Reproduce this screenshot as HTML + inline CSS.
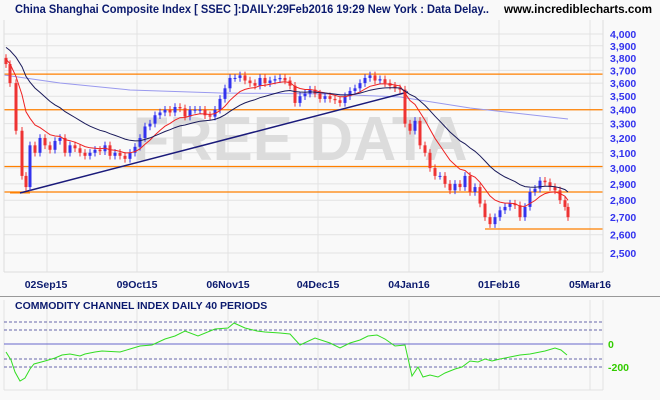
<!DOCTYPE html>
<html><head><meta charset="utf-8"><style>
body{margin:0;background:#fff;width:660px;height:400px;overflow:hidden;font-family:"Liberation Sans",sans-serif}
</style></head><body>
<svg id="s" width="660" height="400" xmlns="http://www.w3.org/2000/svg" style="display:block">
<rect width="660" height="400" fill="#f9f9f9"/>
<text x="15" y="13" font-size="11.5" font-weight="bold" fill="#0b1a6e" textLength="474" lengthAdjust="spacingAndGlyphs" font-family="Liberation Sans,sans-serif">China Shanghai Composite Index [ SSEC ]:DAILY:29Feb2016 19:29 New York : Data Delay..</text>
<text x="504" y="13" font-size="11.5" font-weight="bold" fill="#000" textLength="148" lengthAdjust="spacingAndGlyphs" font-family="Liberation Sans,sans-serif">www.incrediblecharts.com</text>
<g id="grid" stroke="#e3e3e3" stroke-width="1"></g>
<text x="300" y="160" font-size="62" font-weight="bold" fill="#dcdcdc" text-anchor="middle" textLength="335" lengthAdjust="spacingAndGlyphs" font-family="Liberation Sans,sans-serif">FREE DATA</text>
<g id="price"></g>
<line x1="4" y1="272" x2="603" y2="272" stroke="#ddd"/>
<line x1="603" y1="20" x2="603" y2="272" stroke="#ddd"/>
<line x1="4" y1="20" x2="4" y2="272" stroke="#ddd"/>
<g font-size="10.5" font-weight="bold" fill="#0b1a6e" text-anchor="middle" font-family="Liberation Sans,sans-serif">
<text x="46" y="288">02Sep15</text><text x="137" y="288">09Oct15</text><text x="228" y="288">06Nov15</text><text x="318" y="288">04Dec15</text><text x="409" y="288">04Jan16</text><text x="499" y="288">01Feb16</text><text x="590" y="288">05Mar16</text>
</g>
<line x1="0" y1="296.5" x2="660" y2="296.5" stroke="#999"/>
<text x="15" y="309" font-size="10.5" font-weight="bold" fill="#0b1a6e" font-family="Liberation Sans,sans-serif">COMMODITY CHANNEL INDEX DAILY 40 PERIODS</text>
<g id="cci"></g>
<g font-size="10.5" font-weight="bold" fill="#33cc00" font-family="Liberation Sans,sans-serif"><text x="608" y="348">0</text><text x="608" y="371">-200</text></g>
</svg>
<script>
var NS="http://www.w3.org/2000/svg",s=document.getElementById('s');
function el(p,t,a){var e=document.createElementNS(NS,t);for(var k in a)e.setAttribute(k,a[k]);document.getElementById(p).appendChild(e);return e;}
function Y(p){return 34+466*Math.log(4000/p);}
var gx=[47,137,228,318,409,499,590];
gx.forEach(function(x){el('grid','line',{x1:x,y1:20,x2:x,y2:272});el('grid','line',{x1:x,y1:300,x2:x,y2:390});});
var lab=document.createElementNS(NS,'g');lab.setAttribute('font-size','10.5');lab.setAttribute('font-weight','bold');lab.setAttribute('fill','#3333ee');lab.setAttribute('font-family','Liberation Sans,sans-serif');s.appendChild(lab);
for(var p=2500;p<=4000;p+=100){var y=Y(p);el('grid','line',{x1:4,y1:y,x2:603,y2:y});var t=document.createElementNS(NS,'text');t.setAttribute('x',610);t.setAttribute('y',y+4);t.textContent=(p/1000|0)+','+String(p%1000).padStart(3,'0');lab.appendChild(t);}
el('grid','line',{x1:4,y1:390,x2:603,y2:390});el('grid','line',{x1:603,y1:300,x2:603,y2:390});el('grid','line',{x1:4,y1:300,x2:4,y2:390});
[[4,3670],[4,3400],[4,3010],[4,2850]].forEach(function(a){var y=Y(a[1]);el('price','line',{x1:a[0],y1:y,x2:603,y2:y,stroke:'#ff8000','stroke-width':1.3});});
el('price','line',{x1:10,y1:193,x2:30,y2:193,stroke:'#ff8000'});
el('price','line',{x1:485,y1:229,x2:603,y2:229,stroke:'#ff8000','stroke-width':1.3});
el('price','polyline',{points:'4,75 60,83 130,90 220,93 330,94 400,97 470,108 568,119',fill:'none',stroke:'#9999ee','stroke-width':1});
el('price','line',{x1:20,y1:193,x2:408,y2:92,stroke:'#1a1a7a','stroke-width':1.5});
var d=[[6,3750],[10,3600],[16,3250],[22,2950],[26,2880],[30,3150],[35,3100],[40,3200],[45,3150],[50,3120],[55,3180],[60,3200],[65,3100],[70,3150],[75,3130],[80,3100],[85,3080],[90,3100],[95,3120],[100,3110],[105,3150],[110,3080],[115,3100],[120,3080],[125,3060],[130,3100],[135,3140],[140,3200],[145,3280],[150,3300],[155,3360],[160,3380],[165,3400],[170,3380],[175,3420],[180,3410],[185,3350],[190,3400],[195,3400],[200,3400],[205,3360],[210,3350],[215,3400],[220,3480],[225,3560],[230,3640],[235,3640],[240,3660],[245,3620],[250,3600],[255,3580],[260,3640],[265,3600],[270,3620],[275,3630],[280,3640],[285,3620],[290,3580],[295,3450],[300,3500],[305,3520],[310,3550],[315,3520],[320,3480],[325,3500],[330,3480],[335,3470],[340,3450],[345,3500],[350,3540],[355,3560],[360,3600],[365,3640],[370,3660],[375,3620],[380,3630],[385,3600],[390,3580],[395,3560],[400,3550],[405,3300],[410,3250],[415,3320],[420,3150],[425,3100],[430,3000],[435,2950],[440,2950],[445,2900],[450,2860],[455,2900],[460,2880],[465,2950],[470,2850],[475,2880],[480,2780],[485,2700],[490,2660],[495,2700],[500,2740],[505,2760],[510,2780],[515,2770],[520,2700],[525,2760],[530,2850],[535,2870],[540,2920],[545,2910],[550,2880],[555,2860],[560,2800],[565,2760],[568,2700]];
var e1=3800,e2=3900,p1=[],p2=[];
for(var i=0;i<d.length;i++){var x=d[i][0],c=d[i][1],o=i?d[i-1][1]:3800;
 e1+= (c-e1)*0.2;e2+=(c-e2)*0.09;p1.push(x+','+Y(e1).toFixed(1));p2.push(x+','+Y(e2).toFixed(1));
 var up=c>=o,col=up?'#3333ee':'#ee3333',hi=Math.max(o,c)*1.008,lo=Math.min(o,c)*0.992;
 el('price','line',{x1:x,y1:Y(hi),x2:x,y2:Y(lo),stroke:col});
 var yt=Y(Math.max(o,c)),yb=Y(Math.min(o,c));
 el('price','rect',{x:x-1.5,y:yt,width:3,height:Math.max(1,yb-yt),fill:col});}
el('price','polyline',{points:p1.join(' '),fill:'none',stroke:'#ee2222','stroke-width':1});
el('price','polyline',{points:p2.join(' '),fill:'none',stroke:'#1a1a5a','stroke-width':1});
[322,330,359,367].forEach(function(y){el('cci','line',{x1:4,y1:y,x2:603,y2:y,stroke:'#6666aa','stroke-dasharray':'3,2'});});
el('cci','line',{x1:4,y1:344,x2:603,y2:344,stroke:'#6666cc'});
var c=[[6,352],[11,360],[15,372],[20,381],[25,378],[30,369],[34,364],[45,361],[55,358],[62,355],[70,354],[80,356],[85,354],[95,352],[102,351],[120,352],[130,349],[140,346],[152,345],[165,339],[175,336],[185,331],[198,336],[215,329],[228,328],[234,323],[245,328],[257,331],[265,332],[280,333],[290,334],[300,345],[315,338],[330,343],[340,348],[350,343],[360,340],[368,336],[377,335],[385,339],[395,346],[405,345],[412,376],[418,367],[423,377],[430,375],[438,377],[445,373],[455,369],[462,367],[470,361],[478,362],[485,359],[492,361],[500,359],[510,357],[520,355],[530,354],[545,351],[555,348],[561,350],[567,355]];
el('cci','polyline',{points:c.join(' '),fill:'none',stroke:'#33dd22','stroke-width':1});
</script>
</body></html>
